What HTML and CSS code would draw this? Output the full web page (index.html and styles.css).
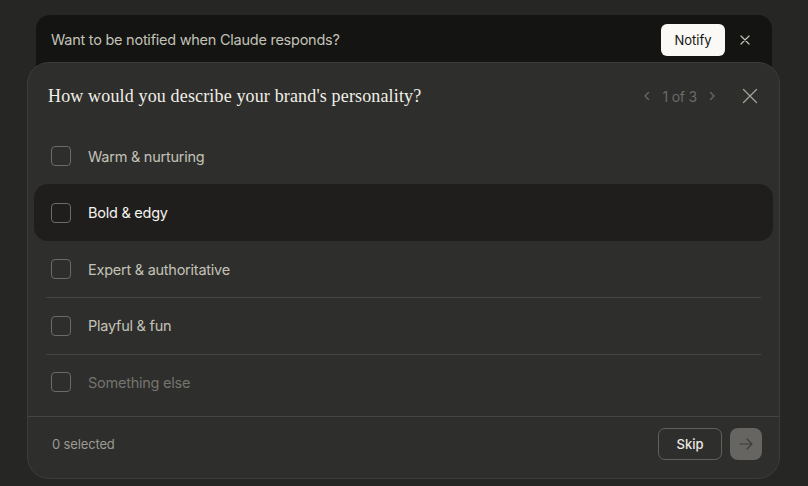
FILE: index.html
```
<!DOCTYPE html>
<html lang="en">
<head>
<meta charset="utf-8">
<link rel="stylesheet" href="styles.css">
</head>
<body>
<div class="page">
  <div class="banner">
    <span class="banner-text">Want to be notified when Claude responds?</span>
    <button class="notify">Notify</button>
    <button class="banner-close" aria-label="Dismiss">
      <svg width="10" height="10" viewBox="0 0 10 10"><path d="M1 1L9 9M9 1L1 9" stroke="currentColor" stroke-width="1.2" stroke-linecap="round"/></svg>
    </button>
  </div>
  <div class="card">
    <div class="card-head">
      <h1 class="title">How would you describe your brand's personality?</h1>
      <div class="pager">
        <svg class="chev" width="8" height="12" viewBox="0 0 8 12"><path d="M5.5 2.5L2 6l3.5 3.5" fill="none" stroke="currentColor" stroke-width="1.2" stroke-linecap="round" stroke-linejoin="round"/></svg>
        <span class="pager-text">1 of 3</span>
        <svg class="chev" width="8" height="12" viewBox="0 0 8 12"><path d="M2.5 2.5L6 6l-3.5 3.5" fill="none" stroke="currentColor" stroke-width="1.2" stroke-linecap="round" stroke-linejoin="round"/></svg>
      </div>
      <button class="card-close" aria-label="Close">
        <svg width="16" height="16" viewBox="0 0 16 16"><path d="M1.5 1.5L14.5 14.5M14.5 1.5L1.5 14.5" stroke="currentColor" stroke-width="1.3" stroke-linecap="round"/></svg>
      </button>
    </div>
    <div class="options">
      <div class="opt"><div class="opt-inner no-line"><span class="box"></span><span class="label">Warm &amp; nurturing</span></div></div>
      <div class="opt hover"><div class="opt-inner no-line"><span class="box"></span><span class="label">Bold &amp; edgy</span></div></div>
      <div class="opt"><div class="opt-inner no-line"><span class="box"></span><span class="label">Expert &amp; authoritative</span></div></div>
      <div class="opt"><div class="opt-inner"><span class="box"></span><span class="label">Playful &amp; fun</span></div></div>
      <div class="opt"><div class="opt-inner"><span class="box"></span><span class="label muted">Something else</span></div></div>
    </div>
    <div class="card-foot">
      <span class="count">0 selected</span>
      <button class="skip">Skip</button>
      <button class="next" aria-label="Next">
        <svg width="16" height="16" viewBox="0 0 16 16"><path d="M2 8h12M9 3l5 5-5 5" fill="none" stroke="currentColor" stroke-width="1.2" stroke-linecap="round" stroke-linejoin="round"/></svg>
      </button>
    </div>
  </div>
</div>
</body>
</html>
```
FILE: styles.css
```
* { box-sizing: border-box; }
html, body { margin: 0; padding: 0; }
body {
  background: #262624;
  font-family: Inter, "Noto Sans", sans-serif;
  width: 808px;
  height: 486px;
  overflow: hidden;
}
button {
  font-family: inherit;
  cursor: pointer;
}
.page {
  padding-top: 15px;
}
.banner {
  margin: 0 36px;
  height: 64px;
  background: #141413;
  border-radius: 14px 14px 0 0;
  display: flex;
  align-items: flex-start;
  padding: 9px 15px 0 15px;
  gap: 8px;
}
.banner-text {
  flex: 1;
  font-size: 14.5px;
  letter-spacing: -0.25px;
  line-height: 32px;
  color: #c3c2b7;
}
.notify {
  width: 64px;
  height: 32px;
  border: none;
  border-radius: 6px;
  background: #faf9f5;
  color: #141413;
  font-size: 13px;
  font-weight: 400;
  padding: 0;
}
.banner-close {
  width: 24px;
  height: 32px;
  border: none;
  background: none;
  color: #c3c2b7;
  padding: 0;
  display: flex;
  align-items: center;
  justify-content: center;
}
.card {
  margin: -17px 28px 0 27px;
  height: 417px;
  background: #2e2e2c;
  border: 1px solid #3c3c39;
  border-radius: 22px;
  display: flex;
  flex-direction: column;
}
.card-head {
  height: 65px;
  display: flex;
  align-items: center;
  padding: 2px 15px 0 20px;
}
.title {
  flex: 1;
  margin: 0;
  font-family: "Liberation Serif", "DejaVu Serif", serif;
  font-weight: 400;
  font-size: 18px;
  color: #f0eee6;
  letter-spacing: 0.15px;
}
.pager {
  display: flex;
  align-items: center;
  gap: 11px;
  color: #6c6b66;
  margin-right: 20px;
}
.pager-text {
  font-size: 14px;
  letter-spacing: -0.2px;
}
.card-close {
  width: 28px;
  height: 28px;
  border: none;
  background: none;
  color: #a3a198;
  padding: 0;
  display: flex;
  align-items: center;
  justify-content: center;
}
.options {
  padding: 0 6px 6px;
  flex: 1;
}
.opt {
  padding: 0 12px;
  border-radius: 14px;
}
.opt.hover {
  background: #1f1e1d;
}
.opt-inner {
  height: 56.5px;
  border-top: 1px solid #454542;
  display: flex;
  align-items: center;
  padding: 0 5px;
  gap: 17px;
}
.opt-inner.no-line {
  border-top-color: transparent;
}
.box {
  width: 20px;
  height: 20px;
  border: 1px solid #6b6a65;
  border-radius: 4px;
  flex: none;
}
.label {
  font-size: 14.5px;
  letter-spacing: -0.25px;
  color: #c3c2b7;
}
.opt.hover .label {
  color: #f5f4ee;
}
.label.muted {
  color: #75746e;
}
.card-foot {
  border-top: 1px solid #454542;
  display: flex;
  align-items: center;
  padding: 0 17px 8px 24px;
  height: 62px;
  gap: 8px;
}
.count {
  flex: 1;
  font-size: 13px;
  letter-spacing: -0.15px;
  color: #9c9a92;
}
.skip {
  width: 64px;
  height: 32px;
  border: 1px solid #62615c;
  border-radius: 7px;
  background: none;
  color: #ebe9e1;
  font-size: 13px;
  font-weight: 500;
  padding: 0;
}
.next {
  width: 32px;
  height: 32px;
  border: none;
  border-radius: 8px;
  background: #666562;
  color: #3d3c3a;
  padding: 0;
  display: flex;
  align-items: center;
  justify-content: center;
}
```
